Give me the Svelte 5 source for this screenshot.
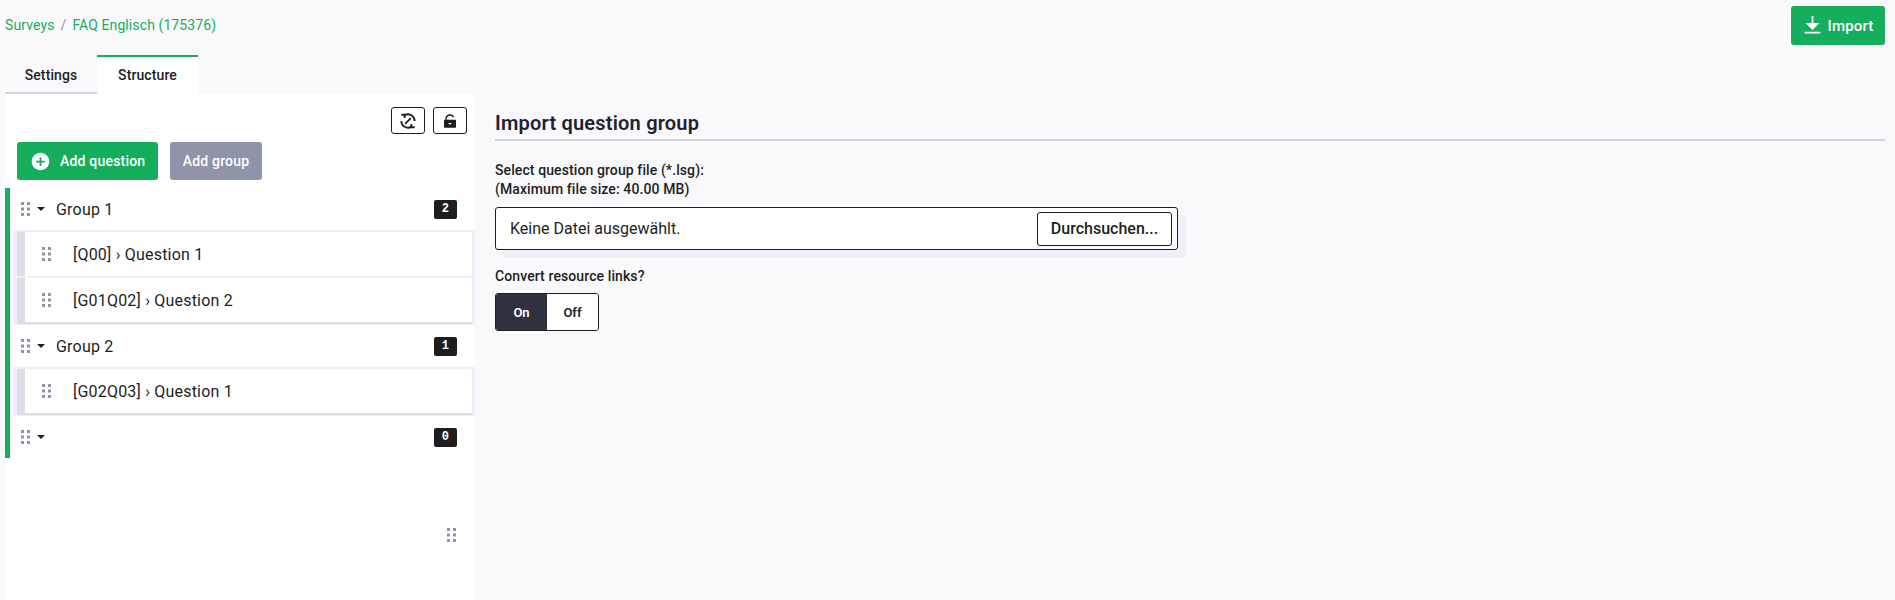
<script>
	const groups = [
		{ name: 'Group 1', questions: ['[Q00] › Question 1', '[G01Q02] › Question 2'] },
		{ name: 'Group 2', questions: ['[G02Q03] › Question 1'] },
		{ name: '', questions: [] }
	];
	let convert = $state(true);
</script>

{#snippet dots()}
	<svg class="dots" width="9" height="14" viewBox="0 0 9 14">
		<rect x="0" y="0" width="3" height="3" />
		<rect x="6" y="0" width="3" height="3" />
		<rect x="0" y="5.5" width="3" height="3" />
		<rect x="6" y="5.5" width="3" height="3" />
		<rect x="0" y="11" width="3" height="3" />
		<rect x="6" y="11" width="3" height="3" />
	</svg>
{/snippet}

<div class="page">
	<header class="topbar">
		<nav class="crumbs">
			<a href="#surveys">Surveys</a>
			<span class="sep">/</span>
			<a href="#survey">FAQ Englisch (175376)</a>
		</nav>
		<button class="btn import">
			<svg width="21" height="21" viewBox="0 0 24 24" fill="currentColor"><path d="M3 19H21V21H3V19ZM13 9H20L12 17L4 9H11V1H13V9Z" /></svg>
			Import
		</button>
	</header>

	<div class="tabs">
		<div class="tab">Settings</div>
		<div class="tab active">Structure</div>
	</div>

	<div class="main">
		<aside class="sidebar">
			<div class="tools">
				<button class="tool" aria-label="Link">
					<svg width="20" height="20" viewBox="0 0 24 24" fill="none" stroke="currentColor" stroke-width="2.2">
						<path d="M8 5A8 8 0 0 1 20 12" />
						<path d="M16 19A8 8 0 0 1 4 12" />
						<path d="M4 4.5h4v4" />
						<path d="M20 19.5h-4v-4" />
						<path d="M8.5 15.5l7-7" />
					</svg>
				</button>
				<button class="tool" aria-label="Unlock">
					<svg width="16" height="16" viewBox="0 0 24 24" fill="currentColor"><path d="M7 10H20C20.5523 10 21 10.4477 21 11V21C21 21.5523 20.5523 22 20 22H4C3.44772 22 3 21.5523 3 21V11C3 10.4477 3.44772 10 4 10H5V9C5 5.13401 8.13401 2 12 2C14.7405 2 17.1131 3.5748 18.2624 5.86882L16.4731 6.76344C15.6522 5.12486 13.9575 4 12 4C9.23858 4 7 6.23858 7 9V10ZM10 15V17H14V15H10Z" fill-rule="evenodd" /></svg>
				</button>
			</div>
			<div class="actions">
				<button class="btn add-question">
					<svg width="21" height="21" viewBox="0 0 24 24" fill="currentColor"><path fill-rule="evenodd" d="M12 22C6.47715 22 2 17.5228 2 12C2 6.47715 6.47715 2 12 2C17.5228 2 22 6.47715 22 12C22 17.5228 17.5228 22 12 22ZM11 11H7V13H11V17H13V13H17V11H13V7H11V11Z" /></svg>
					Add question
				</button>
				<button class="btn add-group">Add group</button>
			</div>

			<div class="tree">
				{#each groups as group}
					<div class="group">
						{@render dots()}
						<span class="caret"></span>
						<span class="group-name">{group.name}</span>
						<span class="badge">{group.questions.length}</span>
					</div>
					{#if group.questions.length}
						<div class="questions">
							{#each group.questions as question}
								<div class="question">
									{@render dots()}
									<span class="question-name">{question}</span>
								</div>
							{/each}
						</div>
					{/if}
				{/each}
			</div>

			<div class="resize">{@render dots()}</div>
		</aside>

		<section class="content">
			<h2>Import question group</h2>
			<div class="field-label">
				Select question group file (*.lsg):<br />
				(Maximum file size: 40.00 MB)
			</div>
			<div class="file">
				<span>Keine Datei ausgewählt.</span>
				<button class="browse">Durchsuchen...</button>
			</div>
			<div class="field-label convert">Convert resource links?</div>
			<div class="toggle">
				<button class:on={convert} onclick={() => (convert = true)}>On</button>
				<button class:on={!convert} onclick={() => (convert = false)}>Off</button>
			</div>
		</section>
	</div>
</div>

<style>
	:global(body) {
		background: #f9f9fc;
	}

	.page {
		height: 600px;
		display: flex;
		flex-direction: column;
		overflow: hidden;
		font-family: Roboto, sans-serif;
		color: #1e1e1e;
		padding: 0 10px 0 5px;
	}

	.topbar {
		height: 55px;
		display: flex;
		justify-content: space-between;
		align-items: flex-start;
		flex: none;
	}

	.crumbs {
		margin-top: 16px;
		font-size: 14px;
		line-height: 18px;
		letter-spacing: 0.1px;
		display: flex;
		gap: 6px;
	}

	.crumbs a {
		color: #14ae5c;
		text-decoration: none;
	}

	.sep {
		color: #9094a8;
	}

	.btn {
		border: none;
		border-radius: 3px;
		color: #fff;
		font: 500 14px Roboto, sans-serif;
		letter-spacing: 0.2px;
		display: flex;
		align-items: center;
	}

	.import {
		margin-top: 6px;
		width: 94px;
		height: 39px;
		background: #14ae5c;
		justify-content: center;
		gap: 4px;
		padding: 0;
		font-size: 15px;
	}

	.tabs {
		display: flex;
		height: 39px;
		flex: none;
		font-size: 14px;
		font-weight: 500;
		letter-spacing: 0.1px;
	}

	.tab {
		width: 92px;
		display: flex;
		align-items: center;
		justify-content: center;
		border-bottom: 2px solid #d4d5dd;
		border-top: 2px solid transparent;
	}

	.tab.active {
		width: 101px;
		background: #fff;
		border-top-color: #14ae5c;
		border-bottom-color: #fff;
	}

	.main {
		flex: 1;
		display: flex;
		gap: 20px;
	}

	.sidebar {
		width: 470px;
		flex: none;
		background: #fff;
		position: relative;
	}

	.tools {
		display: flex;
		justify-content: flex-end;
		gap: 8px;
		padding: 13px 8px 0 0;
	}

	.tool {
		width: 34px;
		height: 27px;
		padding: 0;
		background: #fff;
		border: 1px solid #1e1e1e;
		border-radius: 3px;
		color: #1e1e1e;
		display: flex;
		align-items: center;
		justify-content: center;
	}

	.actions {
		display: flex;
		gap: 12px;
		padding: 8px 0 0 12px;
	}

	.add-question,
	.add-group {
		height: 38px;
		padding: 0;
	}

	.add-question {
		width: 141px;
		background: #14ae5c;
		padding-left: 13px;
		gap: 9px;
	}

	.add-group {
		width: 92px;
		background: #9094a8;
		justify-content: center;
	}

	.tree {
		margin-top: 8px;
		border-left: 5px solid #14ae5c;
		padding-left: 3px;
	}

	.group {
		height: 42px;
		display: flex;
		align-items: center;
		padding-left: 8px;
		font-size: 16px;
		letter-spacing: 0.2px;
	}

	.dots {
		flex: none;
		fill: #9094a8;
		display: block;
	}

	.caret {
		margin-left: 7px;
		width: 0;
		height: 0;
		border-left: 4px solid transparent;
		border-right: 4px solid transparent;
		border-top: 4px solid #1e1e1e;
	}

	.group-name {
		margin-left: 11px;
		flex: 1;
	}

	.badge {
		width: 23px;
		height: 19px;
		margin-right: 18px;
		background: #1e1e1e;
		color: #fff;
		border-radius: 2px;
		font: 700 12px "Liberation Mono", monospace;
		display: flex;
		align-items: center;
		justify-content: center;
	}

	.questions {
		background: #eeeff7;
		padding: 2px 3px 3px 4px;
		display: flex;
		flex-direction: column;
		gap: 2px;
	}

	.question {
		height: 44px;
		background: #fff;
		border-left: 8px solid #dddde6;
		display: flex;
		align-items: center;
		padding-left: 17px;
		font-size: 16px;
		letter-spacing: 0.2px;
	}

	.question:last-child {
		box-shadow: 0 2px 0 #dddde6;
	}

	.question-name {
		margin-left: 22px;
	}

	.resize {
		position: absolute;
		right: 19px;
		top: 434px;
	}

	.content {
		flex: 1;
		padding-top: 18px;
	}

	h2 {
		margin: 0;
		font-size: 20px;
		font-weight: 600;
		line-height: 22px;
		letter-spacing: 0.2px;
		padding-bottom: 5px;
		border-bottom: 2px solid #d4d5dd;
		color: #1c2233;
	}

	.field-label {
		font-size: 14px;
		font-weight: 500;
		line-height: 19px;
		letter-spacing: 0.1px;
	}

	h2 + .field-label {
		margin-top: 20px;
	}

	.file {
		margin-top: 8px;
		width: 683px;
		height: 43px;
		box-sizing: border-box;
		background: #fff;
		border: 1px solid #1e1e1e;
		border-radius: 3px;
		box-shadow: 8px 8px 0 #eeeff7;
		display: flex;
		align-items: center;
		justify-content: space-between;
		padding: 0 5px 0 14px;
		font-size: 16px;
	}

	.browse {
		width: 135px;
		height: 34px;
		padding: 0;
		background: #fff;
		border: 1px solid #1e1e1e;
		border-radius: 3px;
		font: 500 16px Roboto, sans-serif;
		color: #1e1e1e;
	}

	.convert {
		margin-top: 17px;
	}

	.toggle {
		margin-top: 7px;
		width: 104px;
		height: 38px;
		box-sizing: border-box;
		display: flex;
		border: 1px solid #1e1e1e;
		border-radius: 3px;
		overflow: hidden;
		background: #fff;
	}

	.toggle button {
		flex: 1;
		padding: 0;
		border: none;
		background: #fff;
		color: #1e1e1e;
		font: 600 13px Roboto, sans-serif;
	}

	.toggle button.on {
		background: #2f3140;
		color: #fff;
	}
</style>
